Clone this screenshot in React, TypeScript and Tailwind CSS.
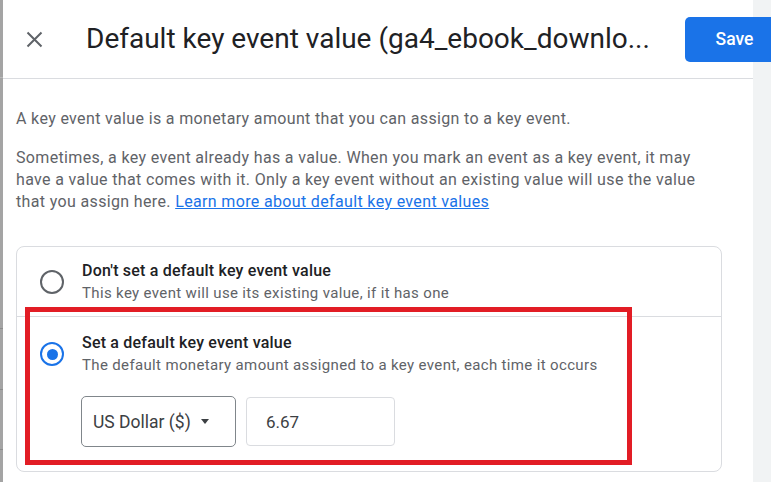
export default function App() {
  return (
    <div className="flex h-[482px] w-[771px] overflow-hidden bg-white font-['Roboto',sans-serif]">
      {/* page behind the dialog */}
      <div className="flex w-[3px] shrink-0 flex-col bg-[#a4a4a4]">
        <div className="h-[78px] border-b border-[#b8b8b8]" />
        <div className="h-[251px] border-b border-[#8c8c8c]" />
        <div className="h-[61px] border-b border-[#8c8c8c]" />
        <div className="h-[60px] border-b border-[#8c8c8c]" />
      </div>

      <div className="flex min-w-0 flex-1 flex-col">
        <header className="flex h-[79px] shrink-0 items-center border-b border-[#dadce0] pl-[23px]">
          <button className="flex h-[17px] w-[17px] items-center justify-center text-[#5f6368]">
            <svg width="17" height="17" viewBox="0 0 17 17" fill="none" stroke="currentColor" strokeWidth="2">
              <path d="M1.5 1.5L15.5 15.5M15.5 1.5L1.5 15.5" />
            </svg>
          </button>
          <h1 className="ml-[43px] whitespace-nowrap text-[28px] leading-8 text-[#202124]">
            Default key event value (ga4_ebook_downlo...
          </h1>
          <button className="relative z-10 -mr-[31px] ml-auto h-[45px] w-[99px] shrink-0 rounded-l-[5px] bg-[#1a73e8] text-[17.5px] font-medium text-white">
            Save
          </button>
        </header>

        <div className="pl-[13px] pr-[31px] pt-[29px] text-[16px] leading-[22px] tracking-[0.35px] text-[#5f6368]">
          <p>A key event value is a monetary amount that you can assign to a key event.</p>
          <p className="mt-[17px]">
            Sometimes, a key event already has a value. When you mark an event as a key event, it may have a
            value that comes with it. Only a key event without an existing value will use the value that you
            assign here.{" "}
            <a href="#" className="text-[#1a73e8] underline">
              Learn more about default key event values
            </a>
          </p>

          <div className="relative mt-[33px] rounded-lg border border-[#dadce0]">
            <label className="flex items-center border-b border-[#dadce0] pb-3 pl-[23px] pt-[13px]">
              <span className="h-6 w-6 shrink-0 rounded-full border-2 border-[#5f6368]" />
              <span className="ml-[18px] flex flex-col">
                <span className="text-[16px] font-medium tracking-[0.2px] text-[#202124]">
                  Don't set a default key event value
                </span>
                <span className="text-[15px]">This key event will use its existing value, if it has one</span>
              </span>
            </label>

            <div className="pb-6 pl-[23px] pt-[15px]">
              <label className="flex items-center">
                <span className="flex h-6 w-6 shrink-0 items-center justify-center rounded-full border-2 border-[#1a73e8]">
                  <span className="h-[11px] w-[11px] rounded-full bg-[#1a73e8]" />
                </span>
                <span className="ml-[18px] flex flex-col">
                  <span className="text-[16px] font-medium tracking-[0.2px] text-[#202124]">
                    Set a default key event value
                  </span>
                  <span className="text-[15px]">
                    The default monetary amount assigned to a key event, each time it occurs
                  </span>
                </span>
              </label>

              <div className="ml-[41px] mt-5 flex items-start gap-[10px] tracking-normal">
                <div className="flex h-[51px] w-[155px] items-center rounded-[5px] border border-[#80868b] pl-[11px] text-[17.5px] text-[#3c4043]">
                  US Dollar ($)
                  <svg className="ml-[10px]" width="8" height="5" viewBox="0 0 8 5">
                    <path d="M0 0h8L4 5z" fill="#3c4043" />
                  </svg>
                </div>
                <div className="mt-px flex h-[49px] w-[149px] items-center rounded-[4px] border border-[#dadce0] pl-[19px] text-[17px] text-[#3c4043]">
                  6.67
                </div>
              </div>
            </div>

            {/* annotation */}
            <div className="pointer-events-none absolute left-[8px] top-[60px] h-[158px] w-[607px] border-[5px] border-[#e21d25]" />
          </div>
        </div>
      </div>

      <div className="w-[18px] shrink-0 bg-[#f1f3f4]" />
    </div>
  );
}
